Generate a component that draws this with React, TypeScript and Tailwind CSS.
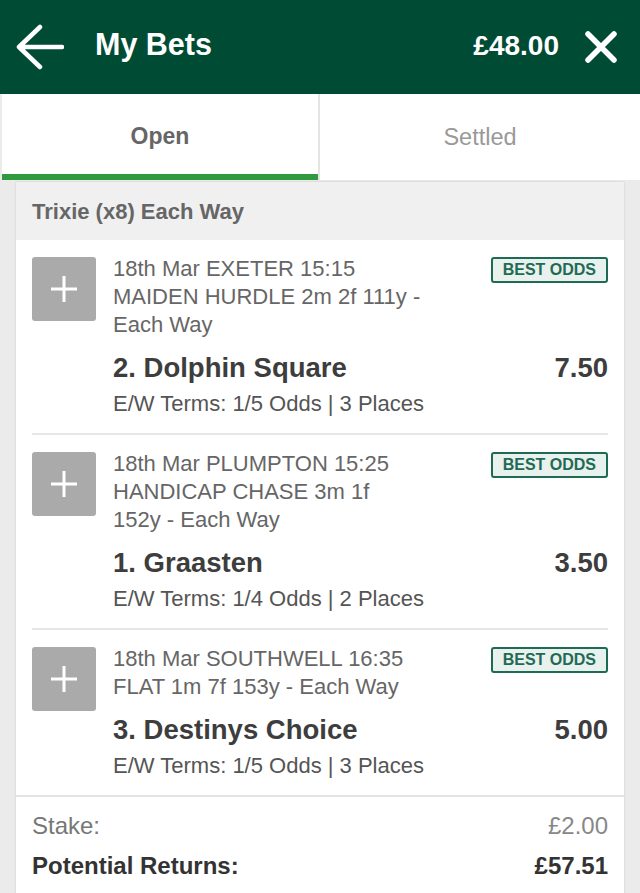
import React from "react";

type Selection = {
    event: string;
    desc: string[];
    runner: string;
    price: string;
    terms: string;
};

const selections: Selection[] = [
    {
        event: "18th Mar EXETER 15:15",
        desc: ["MAIDEN HURDLE 2m 2f 111y -", "Each Way"],
        runner: "2. Dolphin Square",
        price: "7.50",
        terms: "E/W Terms: 1/5 Odds | 3 Places",
    },
    {
        event: "18th Mar PLUMPTON 15:25",
        desc: ["HANDICAP CHASE 3m 1f", "152y - Each Way"],
        runner: "1. Graasten",
        price: "3.50",
        terms: "E/W Terms: 1/4 Odds | 2 Places",
    },
    {
        event: "18th Mar SOUTHWELL 16:35",
        desc: ["FLAT 1m 7f 153y - Each Way"],
        runner: "3. Destinys Choice",
        price: "5.00",
        terms: "E/W Terms: 1/5 Odds | 3 Places",
    },
];

function SelectionRow({ sel, last }: { sel: Selection; last: boolean }) {
    return (
        <div className="px-4">
            <div
                className={`relative flex pt-[15px] pb-[15px] ${
                    last ? "" : "border-b-2 border-[#e6e6e6]"
                }`}
            >
                <div className="mt-[2px] flex h-16 w-16 flex-shrink-0 items-center justify-center rounded-[3px] bg-[#aaaaaa]">
                    <svg width="30" height="30" viewBox="0 0 30 30">
                        <path d="M15 2 V28 M2 15 H28" stroke="white" strokeWidth="3" />
                    </svg>
                </div>
                <div className="ml-[17px] flex flex-1 flex-col">
                    <div className="text-[22px] leading-[28px] text-[#666]">
                        <div>{sel.event}</div>
                        {sel.desc.map(line => (
                            <div key={line}>{line}</div>
                        ))}
                    </div>
                    <div className="mt-[11px] flex items-center justify-between text-[27.5px] leading-[36px] font-bold text-[#3d3d3d]">
                        <span>{sel.runner}</span>
                        <span>{sel.price}</span>
                    </div>
                    <div className="mt-[4px] text-[22px] leading-[28px] text-[#555]">
                        {sel.terms}
                    </div>
                </div>
                <div className="absolute top-[17px] right-0 rounded-[3px] border-2 border-[#1e6b55] bg-[#e8f1ed] px-[10px] py-[1px] text-[16px] leading-[20px] font-bold text-[#1e6b55]">
                    BEST ODDS
                </div>
            </div>
        </div>
    );
}

export default function App() {
    return (
        <div className="min-h-[893px] w-[640px] bg-[#ebebeb] font-['Liberation_Sans',Arial,sans-serif]">
            <div className="flex h-[94px] items-center bg-[#004b34] pr-[23px] pl-[16px] text-white">
                <svg width="48" height="46" viewBox="0 0 48 46">
                    <path
                        d="M3 23 H46 M24 3 L3 23 L24 43"
                        fill="none"
                        stroke="white"
                        strokeWidth="4.5"
                        strokeLinecap="round"
                        strokeLinejoin="round"
                    />
                </svg>
                <div className="mb-[4px] ml-[31px] text-[30.5px] font-bold">My Bets</div>
                <div className="mb-[3px] ml-auto text-[28px] font-bold">£48.00</div>
                <svg className="ml-[26px]" width="32" height="32" viewBox="0 0 32 32">
                    <path
                        d="M3 3 L29 29 M29 3 L3 29"
                        stroke="white"
                        strokeWidth="5.5"
                        strokeLinecap="round"
                    />
                </svg>
            </div>
            <div className="flex h-[86px] pl-[2px]">
                <div className="flex w-[316px] flex-col bg-white">
                    <div className="flex flex-1 items-center justify-center pt-[5px] text-[23px] font-bold text-[#666]">
                        Open
                    </div>
                    <div className="h-[6px] bg-[#2f9a40]" />
                </div>
                <div className="w-[2px] bg-[#e4e4e4]" />
                <div className="flex flex-1 items-center justify-center bg-white pt-[2px] text-[23.5px] text-[#999]">
                    Settled
                </div>
            </div>
            <div className="mx-4 mt-[2px] bg-white shadow-[0_0_2px_rgba(0,0,0,0.15)]">
                <div className="flex h-[58px] items-center bg-[#f0f0f0] px-4 text-[22px] font-bold text-[#666]">
                    Trixie (x8) Each Way
                </div>
                {selections.map((sel, i) => (
                    <SelectionRow key={sel.runner} sel={sel} last={i === selections.length - 1} />
                ))}
                <div className="border-t-2 border-[#e4e4e4] px-4 pt-[14px] pb-[14px]">
                    <div className="flex justify-between text-[24px] leading-[30px] text-[#777]">
                        <span>Stake:</span>
                        <span className="text-[#888]">£2.00</span>
                    </div>
                    <div className="mt-[10px] flex justify-between text-[24px] leading-[30px] font-bold text-[#333]">
                        <span>Potential Returns:</span>
                        <span>£57.51</span>
                    </div>
                </div>
            </div>
        </div>
    );
}
